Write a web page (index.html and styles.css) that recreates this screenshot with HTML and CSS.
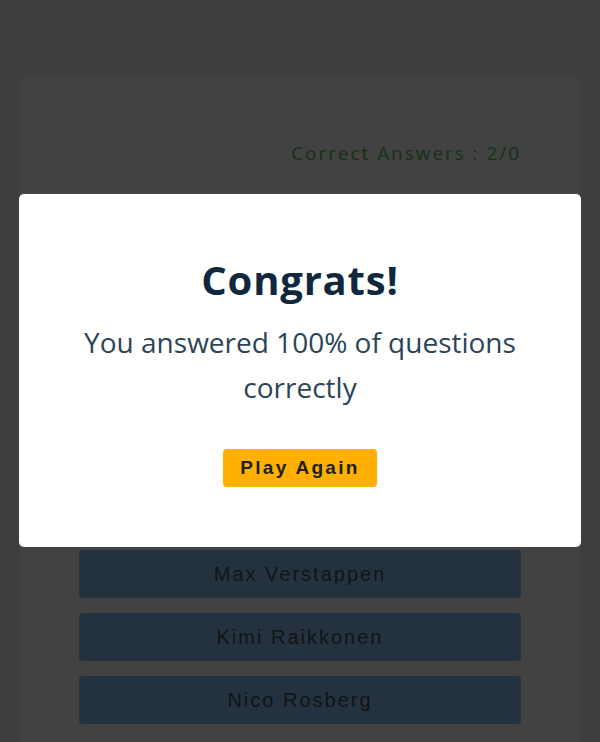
FILE: index.html
```html
<!DOCTYPE html>
<html lang="en">
<head>
<meta charset="utf-8">
<title>Quiz</title>
<link rel="stylesheet" href="styles.css">
</head>
<body>
<main class="quiz">
  <div class="score">Correct Answers : 2/0</div>
  <div class="spacer"></div>
  <div class="options">
    <button class="option">Max Verstappen</button>
    <button class="option">Kimi Raikkonen</button>
    <button class="option">Nico Rosberg</button>
  </div>
</main>
<div class="modal">
  <h1 class="modal-title">Congrats!</h1>
  <p class="modal-text">You answered 100% of questions correctly</p>
  <button class="play">Play Again</button>
</div>
</body>
</html>
```
FILE: styles.css
```css
html, body {
  margin: 0;
  height: 100%;
}
body {
  background: #3d3e40;
  padding: 77px 19px 0;
  box-sizing: border-box;
  overflow: hidden;
  font-family: "Open Sans", "Noto Sans", sans-serif;
}
.quiz {
  background: #424242;
  border-radius: 4px 4px 0 0;
  padding: 0 60px;
  height: 100%;
  box-sizing: border-box;
}
.score {
  text-align: right;
  padding-top: 62px;
  font-size: 19px;
  line-height: 28px;
  letter-spacing: 1.95px;
  color: #163016;
}
.spacer {
  height: 383px;
}
.options {
  display: flex;
  flex-direction: column;
  gap: 15px;
}
.option {
  height: 48px;
  border: none;
  border-radius: 4px;
  background: #243240;
  color: #111316;
  font-family: "Liberation Sans", Arial, sans-serif;
  font-size: 20px;
  letter-spacing: 2px;
}
.modal {
  position: absolute;
  top: 194px;
  left: 19px;
  width: 562px;
  height: 353px;
  background: #fff;
  border-radius: 5px;
  display: flex;
  flex-direction: column;
  align-items: center;
  text-align: center;
  box-sizing: border-box;
  padding: 58px 40px 0;
}
.modal-title {
  margin: 0;
  font-size: 40px;
  line-height: 56px;
  font-weight: 700;
  color: #10283d;
  letter-spacing: 0.8px;
}
.modal-text {
  margin: 12px 0 0;
  font-size: 28px;
  line-height: 45px;
  color: #2c4457;
  font-weight: 400;
}
.play {
  margin-top: 39px;
  width: 154px;
  height: 38px;
  border: none;
  border-radius: 4px;
  background: #ffb000;
  color: #1f1f1f;
  font-family: "Liberation Sans", Arial, sans-serif;
  font-weight: 700;
  font-size: 19px;
  letter-spacing: 2.3px;
}
```
